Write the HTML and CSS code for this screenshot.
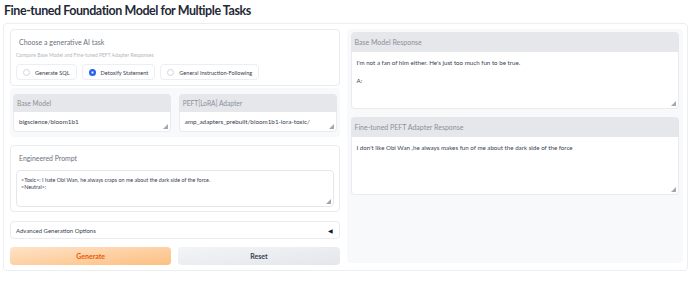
FILE: index.html
```html
<!DOCTYPE html>
<html lang="en">
<head>
  <meta charset="UTF-8">
  <title>Fine-tuned Foundation Model for Multiple Tasks</title>
  <link rel="stylesheet" href="styles.css">
</head>
<body>
  <h1 class="title">Fine-tuned Foundation Model for Multiple Tasks</h1>

  <div class="frame">
    <!-- left column: inputs -->
    <div class="col-left">
      <div class="box task">
        <div class="task-label">Choose a generative AI task</div>
        <div class="task-info">Compare Base Model and Fine-tuned PEFT Adapter Responses</div>
        <div class="radios">
          <label class="radio"><span class="dot"></span>Generate SQL</label>
          <label class="radio"><span class="dot on"></span>Detoxify Statement</label>
          <label class="radio"><span class="dot"></span>General Instruction-Following</label>
        </div>
      </div>

      <div class="model-row">
        <div class="field">
          <div class="field-head">Base Model</div>
          <div class="field-input">bigscience/bloom1b1<span class="grip"></span></div>
        </div>
        <div class="field">
          <div class="field-head">PEFT[LoRA] Adapter</div>
          <div class="field-input">amp_adapters_prebuilt/bloom1b1-lora-toxic/<span class="grip"></span></div>
        </div>
      </div>

      <div class="box prompt">
        <div class="prompt-label">Engineered Prompt</div>
        <div class="prompt-input">
          &lt;Toxic&gt;: I hate Obi Wan, he always craps on me about the dark side of the force.<br>
          &lt;Neutral&gt;:
          <span class="grip"></span>
        </div>
      </div>

      <div class="box advanced">
        <span>Advanced Generation Options</span>
        <span class="caret">&#9664;</span>
      </div>

      <div class="buttons">
        <button class="btn btn-primary">Generate</button>
        <button class="btn btn-secondary">Reset</button>
      </div>
    </div>

    <!-- right column: outputs -->
    <div class="col-right">
      <div class="field out">
        <div class="field-head out-head">Base Model Response</div>
        <div class="out-text base-out">
          I'm not a fan of him either. He's just too much fun to be true.<br><br>A:
          <span class="grip"></span>
        </div>
      </div>
      <div class="field out">
        <div class="field-head out-head">Fine-tuned PEFT Adapter Response</div>
        <div class="out-text peft-out">
          I don't like Obi Wan ,he always makes fun of me about the dark side of the force
          <span class="grip"></span>
        </div>
      </div>
    </div>
  </div>
</body>
</html>
```

FILE: styles.css
```css
body {
  margin: 0;
  background: #ffffff;
  font-family: "Lato", "Noto Sans", sans-serif;
  color: #374151;
}

.title {
  margin: 0;
  padding: 2px 0 0 4px;
  height: 23px;
  box-sizing: border-box;
  font-size: 12.5px;
  line-height: 18px;
  font-weight: 700;
  letter-spacing: -0.45px;
  color: #1f2937;
}

.frame {
  display: flex;
  gap: 7px;
  width: 673px;
  height: 237px;
  margin-left: 3px;
  padding: 5px 4px 4px 6px;
  border: 1px solid #eceef1;
  border-radius: 4px;
}

/* left side */
.col-left {
  width: 330px;
  display: flex;
  flex-direction: column;
}

.box {
  background: #fff;
  border: 1px solid #e9ebee;
  border-radius: 4px;
  box-sizing: border-box;
}

.task {
  height: 57px;
  padding: 7px 5px 0 5px;
}
.task-label {
  font-size: 7px;
  line-height: 11px;
  color: #6b7280;
  padding-left: 3px;
}
.task-info {
  font-size: 5px;
  line-height: 8px;
  margin-top: 3px;
  color: #b3b8c0;
}
.radios {
  display: flex;
  gap: 5px;
  margin-top: 5px;
}
.radio {
  display: flex;
  align-items: center;
  gap: 5px;
  height: 16px;
  box-sizing: border-box;
  padding: 0 6px;
  border: 1px solid #eceef1;
  border-radius: 4px;
  font-size: 5.6px;
  color: #374151;
}
.dot {
  width: 7px;
  height: 7px;
  box-sizing: border-box;
  border: 1px solid #d1d5db;
  border-radius: 50%;
  background: #fff;
}
.dot.on {
  border: 2px solid #2563eb;
  background: #fff;
  box-shadow: inset 0 0 0 0.5px #2563eb;
}

.model-row {
  display: flex;
  gap: 8px;
  height: 49px;
  margin-top: 2px;
  padding: 6px 3px 0 3px;
  background: #f8f9fa;
  border-radius: 4px;
  box-sizing: border-box;
}
.field {
  flex: 1;
  display: flex;
  flex-direction: column;
}
.field-head {
  height: 18px;
  line-height: 18px;
  padding-left: 4px;
  font-size: 6.6px;
  color: #8a909a;
  background: #e6e7ea;
  border-radius: 4px 4px 0 0;
}
.field-input {
  position: relative;
  height: 20px;
  line-height: 19px;
  padding-left: 5px;
  font-size: 6.3px;
  color: #374151;
  background: #fff;
  border: 1px solid #e9ebee;
  border-top: none;
  border-radius: 0 0 4px 4px;
  box-sizing: border-box;
}

.grip {
  position: absolute;
  right: 2px;
  bottom: 2px;
  width: 0;
  height: 0;
  border-left: 5px solid transparent;
  border-bottom: 5px solid #a3a7ad;
}

.prompt {
  height: 67px;
  margin-top: 8px;
  padding: 7px 5px 5px 5px;
}
.prompt-label {
  font-size: 6.9px;
  line-height: 11px;
  color: #6b7280;
  padding-left: 3px;
}
.prompt-input {
  position: relative;
  height: 37px;
  margin-top: 6px;
  padding: 6px 5px 0 4px;
  box-sizing: border-box;
  font-size: 5.4px;
  line-height: 7px;
  color: #374151;
  border: 1px solid #e5e7eb;
  border-radius: 4px;
}

.advanced {
  display: flex;
  justify-content: space-between;
  align-items: center;
  height: 18px;
  margin-top: 9px;
  padding: 0 6px 0 5px;
  font-size: 6px;
  color: #374151;
}
.caret {
  font-size: 6px;
  color: #111827;
}

.buttons {
  display: flex;
  gap: 7px;
  margin-top: 8px;
}
.btn {
  flex: 1;
  height: 18px;
  border: none;
  border-radius: 4px;
  font-family: inherit;
  font-size: 7px;
  font-weight: 700;
}
.btn-primary {
  background: linear-gradient(to bottom right, #fee3c8, #fdbf80);
  color: #ea580c;
}
.btn-secondary {
  background: linear-gradient(to bottom right, #f3f4f6, #e4e6ea);
  color: #374151;
}

/* right side */
.col-right {
  width: 337px;
  display: flex;
  flex-direction: column;
  gap: 8px;
  padding: 3px 4px 0 4px;
  box-sizing: border-box;
  background: #f8f9fb;
  border-radius: 4px;
  height: 234px;
}
.out {
  flex: none;
}
.out-head {
  height: 20px;
  line-height: 20px;
  font-size: 7px;
}
.out-text {
  position: relative;
  padding: 6px 5px 0 5px;
  font-size: 6.2px;
  line-height: 9px;
  color: #374151;
  background: #fff;
  border: 1px solid #e9ebee;
  border-top: none;
  border-radius: 0 0 4px 4px;
  box-sizing: border-box;
}
.base-out {
  height: 57px;
}
.peft-out {
  height: 58px;
}
```
